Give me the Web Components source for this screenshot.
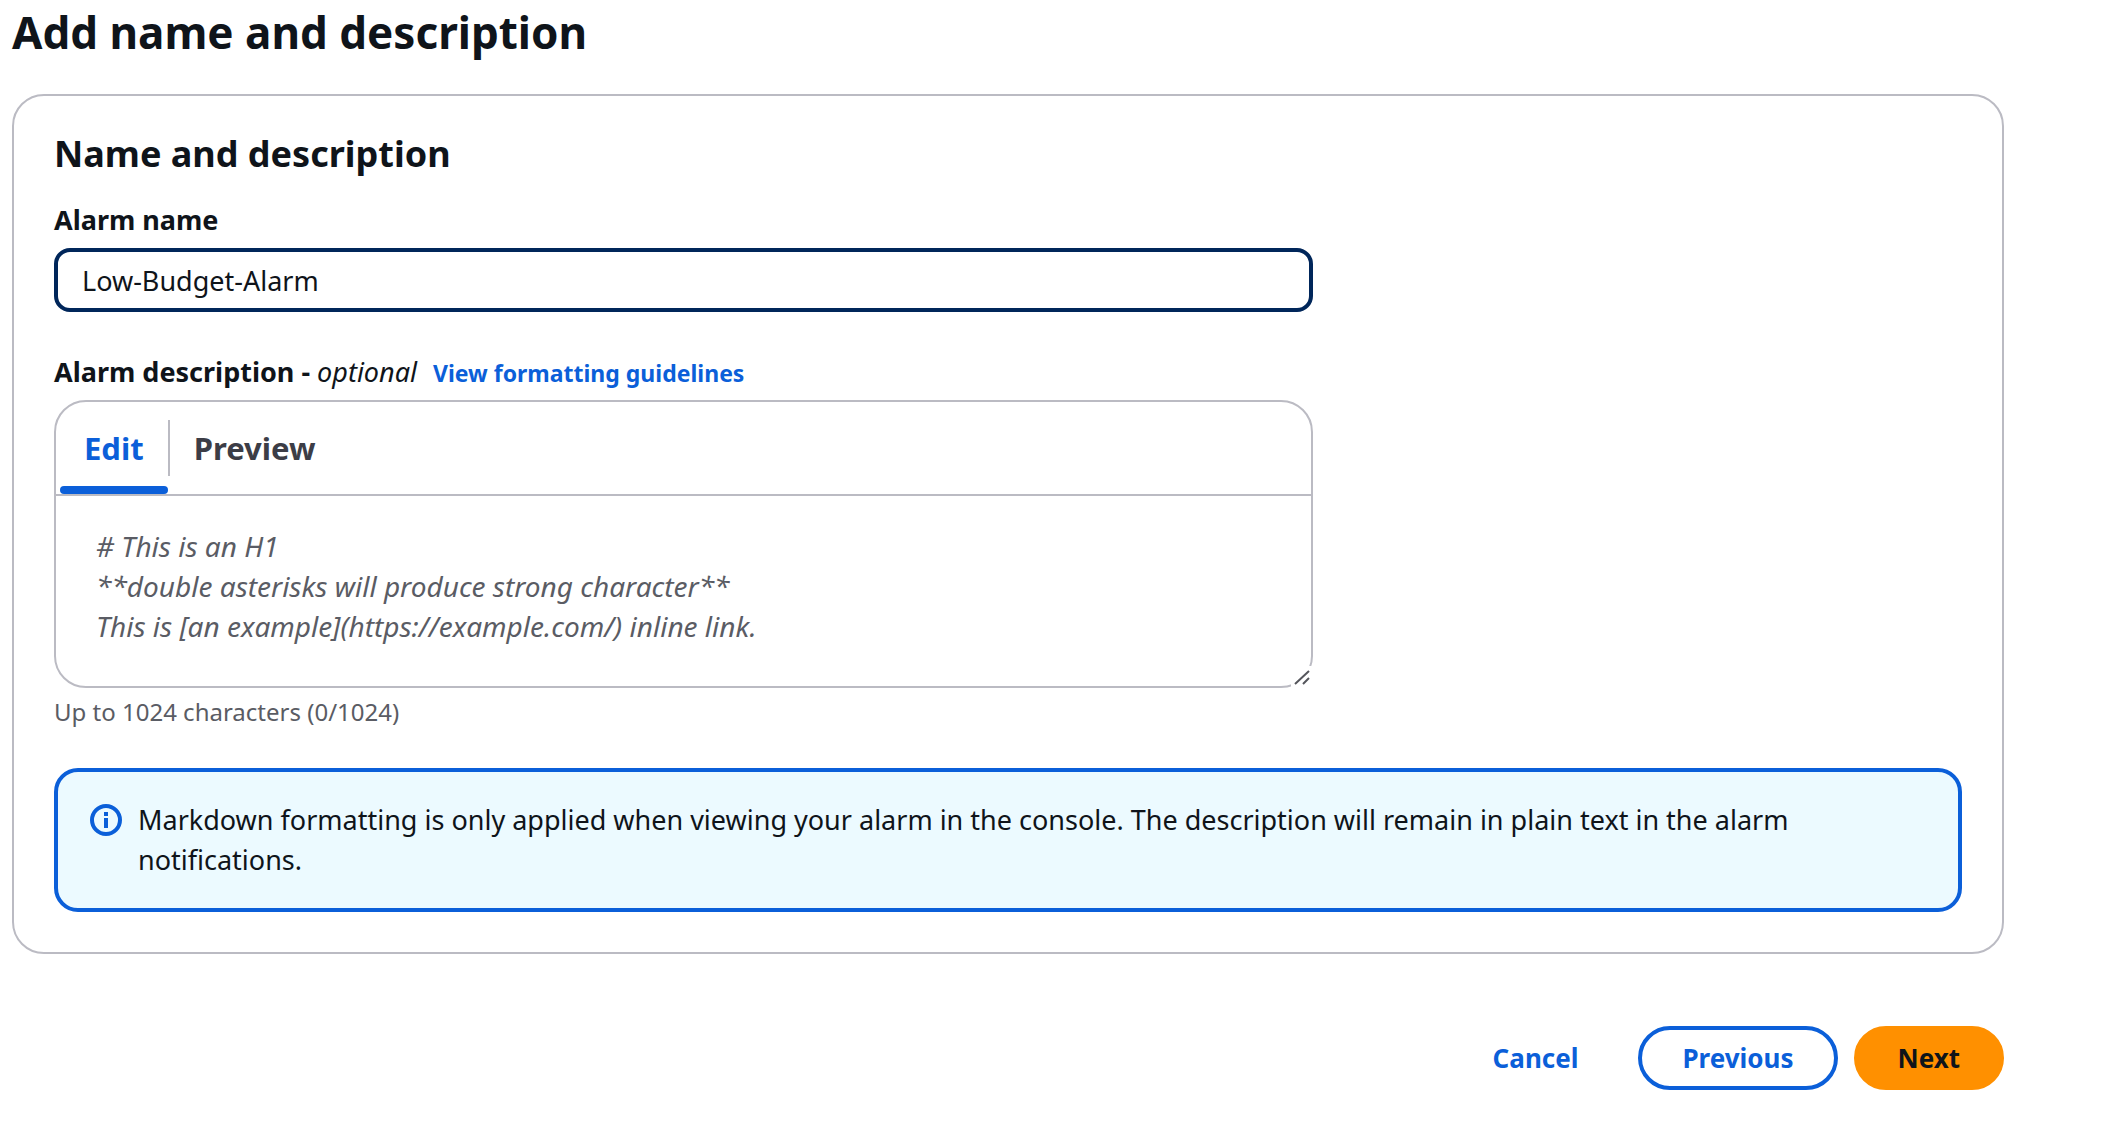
<!DOCTYPE html>
<html lang="en">
<head>
<meta charset="utf-8">
<meta name="viewport" content="width=device-width, initial-scale=1">
<title>Add name and description</title>
<style>
  :root {
    --text: #0f141a;
    --muted: #5a5c64;
    --tab: #3c3d46;
    --accent: #0b5fd9;
    --line: #bbbbc3;
    --focus: #00265a;
    --info-bg: #ecfaff;
    --primary: #ff9000;
  }
  body {
    margin: 0;
    background: #fff;
    color: var(--text);
    font: 27px/40px "Noto Sans", "Open Sans", sans-serif;
  }
</style>
</head>
<body>
<wizard-step heading="Add name and description">
  <content-card heading="Name and description">
    <name-field label="Alarm name" value="Low-Budget-Alarm"></name-field>
    <markdown-editor></markdown-editor>
    <info-alert>Markdown formatting is only applied when viewing your alarm in the console. The description will remain in plain text in the alarm notifications.</info-alert>
  </content-card>
  <step-actions slot="actions"></step-actions>
</wizard-step>

<script>
  class BaseElement extends HTMLElement {
    connectedCallback() {
      if (this.shadowRoot) return;
      this.attachShadow({ mode: "open" }).innerHTML =
        "<style>*{box-sizing:border-box}:host{display:block}button,input,textarea{font:inherit;color:inherit;margin:0}</style>" + this.render();
    }
  }

  customElements.define("wizard-step", class extends BaseElement {
    render() {
      return `<style>
        main { padding: 0 106px 0 12px; }
        h1 { margin: 0 0 30px; font-size: 44px; line-height: 64px; font-weight: 700; }
        footer { margin-top: 72px; }
      </style>
      <main><h1>${this.getAttribute("heading")}</h1><slot></slot><footer><slot name="actions"></slot></footer></main>`;
    }
  });

  customElements.define("content-card", class extends BaseElement {
    render() {
      return `<style>
        section { border: 2px solid var(--line); border-radius: 32px; padding: 34px 40px 40px; }
        h2 { margin: 0 0 22px; font-size: 36px; line-height: 48px; font-weight: 700; }
      </style>
      <section><h2>${this.getAttribute("heading")}</h2><slot></slot></section>`;
    }
  });

  customElements.define("name-field", class extends BaseElement {
    render() {
      return `<style>
        :host { width: 66%; margin-bottom: 40px; }
        label { display: block; font-weight: 700; margin-bottom: 8px; }
        input { display: block; width: 100%; height: 64px; border: 4px solid var(--focus); border-radius: 16px; padding: 0 24px; background: #fff; outline: 0; }
      </style>
      <label for="name">${this.getAttribute("label")}</label>
      <input id="name" type="text" value="${this.getAttribute("value")}">`;
    }
  });

  customElements.define("markdown-editor", class extends BaseElement {
    render() {
      return `<style>
        :host { margin-bottom: 40px; }
        .head { display: flex; align-items: baseline; gap: 16px; margin-bottom: 8px; }
        label { font-weight: 700; }
        label i { font-weight: 400; }
        a { color: var(--accent); font-size: 23px; line-height: 32px; font-weight: 700; text-decoration: none; }
        .box { position: relative; width: 66%; border: 2px solid var(--line); border-radius: 32px; }
        .tabs { display: flex; height: 94px; padding-left: 4px; border-bottom: 2px solid var(--line); }
        .tab { display: flex; flex-direction: column; }
        button { flex: 1; display: flex; align-items: center; border: 0; background: none; padding: 8px 24px 0; font-size: 31px; font-weight: 700; color: var(--tab); }
        button[aria-selected=true] { color: var(--accent); }
        .tab::after { content: ""; height: 8px; border-radius: 4px; }
        .tab.on::after { background: var(--accent); }
        .rule { width: 2px; margin: 18px 0; background: var(--line); }
        textarea { display: block; width: 100%; height: 190px; border: 0; border-radius: 0 0 30px 30px; padding: 30px 40px; background: none; font-size: 28px; resize: none; outline: 0; overflow: hidden; }
        textarea::placeholder { color: var(--muted); font-style: italic; opacity: 1; }
        svg { position: absolute; right: -2px; bottom: -2px; background: #fff; pointer-events: none; }
        .hint { font-size: 24px; line-height: 32px; color: var(--muted); margin-top: 8px; }
      </style>
      <div class="head"><label for="description">Alarm description - <i>optional</i></label><a href="#guidelines">View formatting guidelines</a></div>
      <div class="box">
        <div class="tabs" role="tablist">
          <div class="tab on"><button type="button" role="tab" aria-selected="true">Edit</button></div>
          <span class="rule"></span>
          <div class="tab"><button type="button" role="tab" aria-selected="false">Preview</button></div>
        </div>
        <textarea id="description" maxlength="1024" placeholder="# This is an H1&#10;**double asterisks will produce strong character**&#10;This is [an example](https://example.com/) inline link."></textarea>
        <svg width="22" height="22" viewBox="0 0 22 22" fill="none" stroke="#55565c" stroke-width="2" aria-hidden="true"><path d="M4 18 18 5M12 18l6-6"/></svg>
      </div>
      <div class="hint">Up to 1024 characters (0/1024)</div>`;
    }
  });

  customElements.define("info-alert", class extends BaseElement {
    render() {
      return `<style>
        div { display: flex; align-items: flex-start; gap: 16px; padding: 28px 32px; border: 4px solid var(--accent); border-radius: 24px; background: var(--info-bg); }
        svg { flex: none; margin-top: 4px; }
        p { margin: 0; }
      </style>
      <div role="note">
        <svg width="32" height="32" viewBox="0 0 32 32" fill="none" stroke="var(--accent)" stroke-width="4" aria-hidden="true"><circle cx="16" cy="16" r="14"/><path d="M16 14v10M16 8v4"/></svg>
        <p><slot></slot></p>
      </div>`;
    }
  });

  customElements.define("step-actions", class extends BaseElement {
    render() {
      return `<style>
        nav { display: flex; justify-content: flex-end; gap: 16px; }
        button { height: 64px; border: 4px solid transparent; border-radius: 32px; padding: 0 40px; background: none; font-size: 26px; font-weight: 700; color: var(--accent); }
        .outline { border-color: var(--accent); }
        .primary { border-color: var(--primary); background: var(--primary); color: var(--text); }
      </style>
      <nav><button type="button">Cancel</button><button type="button" class="outline">Previous</button><button type="button" class="primary">Next</button></nav>`;
    }
  });
</script>
</body>
</html>
